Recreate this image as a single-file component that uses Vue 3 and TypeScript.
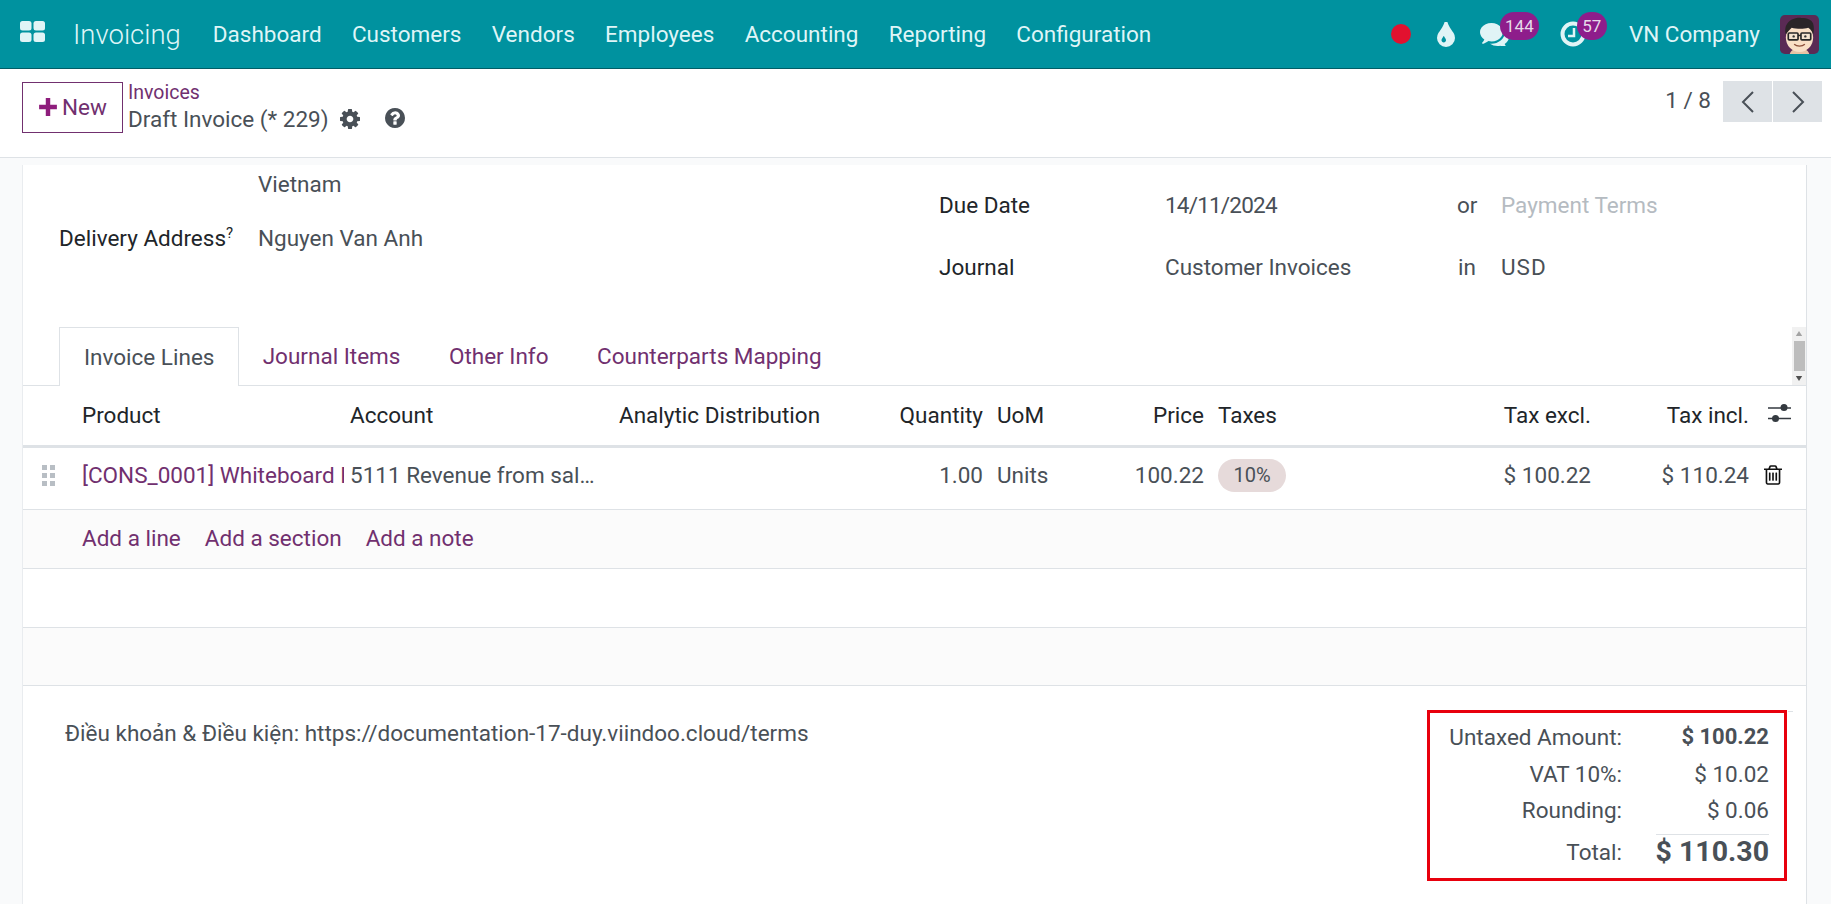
<script setup lang="ts">
const menus = ['Dashboard', 'Customers', 'Vendors', 'Employees', 'Accounting', 'Reporting', 'Configuration']
const tabs = ['Journal Items', 'Other Info', 'Counterparts Mapping']
const totals = [
  { label: 'Untaxed Amount:', value: '$ 100.22', cls: 'strong' },
  { label: 'VAT 10%:', value: '$ 10.02', cls: '' },
  { label: 'Rounding:', value: '$ 0.06', cls: '' },
  { label: 'Total:', value: '$ 110.30', cls: 'grand' }
]
</script>

<template>
  <div class="page">
    <header class="navbar">
      <svg class="apps" viewBox="0 0 25 21" width="25" height="21">
        <rect x="0" y="0" width="11.5" height="9.5" rx="2.5" />
        <rect x="13.5" y="0" width="11.5" height="9.5" rx="2.5" />
        <rect x="0" y="11.5" width="11.5" height="9.5" rx="2.5" />
        <rect x="13.5" y="11.5" width="11.5" height="9.5" rx="2.5" />
      </svg>
      <span class="brand">Invoicing</span>
      <nav class="menu">
        <span v-for="m in menus" :key="m">{{ m }}</span>
      </nav>
      <div class="systray">
        <span class="rec"></span>
        <svg class="drop" viewBox="384 128 1024 1408" width="18" height="25">
          <path d="M896 1152q0-36-20-69-1-1-15.500-22.500t-25.500-38-25-44-21-50.500q-4-16-21-16t-21 16q-7 23-21 50.500t-25 44-25.500 38-15.500 22.500q-20 33-20 69 0 53 37.500 90.500t90.500 37.500 90.500-37.500 37.500-90.500zm512-128q0 212-150 362t-362 150-362-150-150-362q0-145 81-275 6-9 62.500-90.500t101-151 99.500-178 83-201.500q9-30 34-47t51-17 51.500 17 33.500 47q28 93 83 201.500t99.500 178 101 151 62.500 90.500q81 127 81 275z" />
        </svg>
        <div class="notif chat">
          <svg viewBox="0 256 1792 1280" width="29" height="23" preserveAspectRatio="none">
            <path d="M1408 768q0 139-94 257t-256.500 186.500-353.500 68.500q-86 0-176-16-124 88-278 128-36 9-86 16h-3q-11 0-20.500-8t-11.500-21q-1-3-1-6.500t.5-6.500 2-6l2.500-5 3.500-5.500 4-5 4.500-5 4-4.500q5-6 23-25t26-29.500 22.500-29 25-38.500 20.500-44q-124-72-195-177t-71-224q0-139 94-257t256.500-186.500 353.500-68.500 353.500 68.500 256.500 186.500 94 257zm384 256q0 120-71 224.500t-195 176.500q10 24 20.500 44t25 38.500 22.500 29 26 29.500 23 25q1 1 4 4.500t4.500 5 4 5 3.500 5.500l2.500 5 2 6 .5 6.500-1 6.500q-3 14-13 22t-22 7q-50-7-86-16-154-40-278-128-90 16-176 16-271 0-472-132 58 4 88 4 161 0 309-45t264-129q125-92 192-212t67-254q0-77-23-152 129 71 204 178t75 230z" />
          </svg>
          <span class="badge wide">144</span>
        </div>
        <div class="notif clock">
          <svg viewBox="0 0 26 26" width="26" height="26" fill="none">
            <circle cx="13" cy="13" r="10.5" stroke-width="4" />
            <path d="M14 7v8H8" stroke-width="2.5" />
          </svg>
          <span class="badge">57</span>
        </div>
        <span class="company">VN Company</span>
        <svg class="avatar" viewBox="0 0 40 40" width="39" height="39">
          <rect width="40" height="40" rx="5" fill="#5a2a55" />
          <path d="M10 40c1-4 5-6 10-6s9 2 10 6Z" fill="#e8c3a5" />
          <ellipse cx="20" cy="23" rx="14" ry="15" fill="#f8dfc6" />
          <path d="M6 20C3 9 12 2 22 3c6 0 11 2 12 6 1 3 1 8 0 11-1-3-2-5-5-7-6 2-13 1-17 0-2 2-4 4-6 7Z" fill="#2b2528" />
          <rect x="8.500" y="18.500" width="10" height="7" rx="1" fill="#f3e3d0" stroke="#262626" stroke-width="1.700" />
          <rect x="21.500" y="18.500" width="10" height="7" rx="1" fill="#f3e3d0" stroke="#262626" stroke-width="1.700" />
          <path d="M18.500 21h3" stroke="#262626" stroke-width="1.500" />
          <circle cx="14" cy="22" r="1.200" fill="#333" />
          <circle cx="26" cy="22" r="1.200" fill="#333" />
          <path d="M14.500 30c3 2.500 8 2.500 11 0" stroke="#8a4d38" stroke-width="1.400" fill="none" />
        </svg>
      </div>
    </header>

    <section class="panel">
      <button class="new-btn">
        <svg viewBox="0 0 18 18" width="20" height="20"><path d="M7 1h4v6h6v4h-6v6H7v-6H1V7h6Z" /></svg>
        <span>New</span>
      </button>
      <div class="crumbs">
        <a class="crumb">Invoices</a>
        <div class="current">
          <span>Draft Invoice (* 229)</span>
          <svg class="gear" viewBox="128 128 1536 1536" width="20" height="20">
            <path d="M1152 896q0-106-75-181t-181-75-181 75-75 181 75 181 181 75 181-75 75-181zm512-109v222q0 12-8 23t-20 13l-185 28q-19 54-39 91 35 50 107 138 10 12 10 25t-9 23q-27 37-99 108t-94 71q-12 0-26-9l-138-108q-44 23-91 38-16 136-29 186-7 28-36 28h-222q-14 0-24.500-8.500t-11.500-21.500l-28-184q-49-16-90-37l-141 107q-10 9-25 9-14 0-25-11-126-114-165-168-7-10-7-23 0-12 8-23 15-21 51-66.500t54-70.500q-27-50-41-99l-183-27q-13-2-21-12.500t-8-23.500v-222q0-12 8-23t19-13l186-28q14-46 39-92-40-57-107-138-10-12-10-24 0-10 9-23 26-36 98.500-107.500t94.500-71.500q13 0 26 10l138 107q44-23 91-38 16-136 29-186 7-28 36-28h222q14 0 24.500 8.500t11.500 21.500l28 184q49 16 90 37l142-107q9-9 24-9 13 0 25 10 129 119 165 170 7 8 7 22 0 12-8 23-15 21-51 66.500t-54 70.500q26 50 41 98l183 28q13 2 21 12.500t8 23.500z" />
          </svg>
          <svg class="help" viewBox="128 128 1536 1536" width="20" height="20">
            <path d="M1024 1376v-192q0-14-9-23t-23-9h-192q-14 0-23 9t-9 23v192q0 14 9 23t23 9h192q14 0 23-9t9-23zm256-672q0-88-55.500-163t-138.500-116-170-41q-243 0-371 213-15 24 8 42l132 100q7 6 19 6 16 0 25-12 53-68 86-92 34-24 86-24 48 0 85.500 26t37.500 59q0 38-20 61t-68 45q-63 28-115.500 86.500t-52.500 125.500v36q0 14 9 23t23 9h192q14 0 23-9t9-23q0-19 21.500-49.500t54.500-49.500q32-18 49-28.500t46-35 44.500-48 28-60.500 12.500-81zm384 192q0 209-103 385.500t-279.500 279.500-385.500 103-385.500-103-279.500-279.500-103-385.500 103-385.500 279.500-279.500 385.500-103 385.500 103 279.500 279.500 103 385.500z" />
          </svg>
        </div>
      </div>
      <div class="pager">
        <span class="count">1 / 8</span>
        <div class="pager-btns">
          <button><svg viewBox="0 0 14 24" width="14" height="24"><path d="M12 2 2 12l10 10" /></svg></button>
          <button><svg viewBox="0 0 14 24" width="14" height="24"><path d="M2 2l10 10L2 22" /></svg></button>
        </div>
      </div>
    </section>

    <main class="content">
      <div class="sheet">
        <div class="fields">
          <div class="col-left">
            <div class="f-row top"><span class="label"></span><span class="val">Vietnam</span></div>
            <div class="f-row addr"><span class="label dark">Delivery Address<sup>?</sup></span><span class="val">Nguyen Van Anh</span></div>
          </div>
          <div class="col-right">
            <div class="r-row">
              <span class="r-label">Due Date</span><span class="r-val date">14/11/2024</span>
              <span class="r-sep">or</span><span class="muted">Payment Terms</span>
            </div>
            <div class="r-row">
              <span class="r-label">Journal</span><span class="r-val">Customer Invoices</span>
              <span class="r-sep in">in</span><span class="usd">USD</span>
            </div>
          </div>
        </div>

        <div class="tabs-wrap">
          <div class="tabs">
            <span class="tab active">Invoice Lines</span>
            <span v-for="t in tabs" :key="t" class="tab">{{ t }}</span>
          </div>
          <div class="scroll">
            <svg viewBox="0 0 10 6"><path d="M5 0l4 6H1Z" fill="#a3a3a3" /></svg>
            <span class="thumb"></span>
            <svg viewBox="0 0 10 6"><path d="M5 6 1 0h8Z" fill="#505050" /></svg>
          </div>
        </div>

        <div class="grid head">
          <span></span>
          <span>Product</span><span>Account</span><span>Analytic Distribution</span>
          <span class="r">Quantity</span><span class="pl">UoM</span><span class="r">Price</span><span class="pl">Taxes</span>
          <span class="r">Tax excl.</span><span class="r">Tax incl.</span>
          <svg class="sliders" viewBox="0 0 23 18" width="23" height="18">
            <path d="M0 4h23M0 14.500h23" stroke="#343a40" stroke-width="1.300" />
            <circle cx="16" cy="3.500" r="3.500" fill="#343a40" /><circle cx="7.500" cy="14.500" r="3.500" fill="#343a40" />
          </svg>
        </div>
        <div class="grid line">
          <svg class="grip" viewBox="0 0 13 21" width="13" height="21">
            <g fill="#b8bec4">
              <rect x="0" y="0" width="5" height="5" /><rect x="8" y="0" width="5" height="5" />
              <rect x="0" y="8" width="5" height="5" /><rect x="8" y="8" width="5" height="5" />
              <rect x="0" y="16" width="5" height="5" /><rect x="8" y="16" width="5" height="5" />
            </g>
          </svg>
          <span class="link clip">[CONS_0001] Whiteboard Pen</span>
          <span class="clip ell">5111 Revenue from sales</span>
          <span></span>
          <span class="r">1.00</span><span class="pl">Units</span><span class="r">100.22</span>
          <span class="pl"><span class="pill">10%</span></span>
          <span class="r">$ 100.22</span><span class="r">$ 110.24</span>
          <svg class="trash" viewBox="192 128 1408 1536" width="18" height="20">
            <path d="M704 736v576q0 14-9 23t-23 9h-64q-14 0-23-9t-9-23v-576q0-14 9-23t23-9h64q14 0 23 9t9 23zm256 0v576q0 14-9 23t-23 9h-64q-14 0-23-9t-9-23v-576q0-14 9-23t23-9h64q14 0 23 9t9 23zm256 0v576q0 14-9 23t-23 9h-64q-14 0-23-9t-9-23v-576q0-14 9-23t23-9h64q14 0 23 9t9 23zm128 724v-948h-896v948q0 22 7 40.500t14.500 27 10.500 8.500h832q3 0 10.500-8.500t14.500-27 7-40.500zm-672-1076h448l-48-117q-7-9-17-11h-317q-10 2-17 11zm928 32v64q0 14-9 23t-23 9h-96v948q0 83-47 143.500t-113 60.500h-832q-66 0-113-58.500t-47-141.500v-952h-96q-14 0-23-9t-9-23v-64q0-14 9-23t23-9h309l70-167q15-37 54-63t79-26h320q40 0 79 26t54 63l70 167h309q14 0 23 9t9 23z" />
          </svg>
        </div>
        <div class="add-row">
          <a>Add a line</a><a>Add a section</a><a>Add a note</a>
        </div>
        <div class="blank one"></div>
        <div class="blank two"></div>

        <div class="footer">
          <div class="terms">Điều khoản &amp; Điều kiện: https://documentation-17-duy.viindoo.cloud/terms</div>
          <div class="totals">
            <div v-for="t in totals" :key="t.label" class="t-row" :class="t.cls">
              <span class="t-label">{{ t.label }}</span>
              <span class="t-val">{{ t.value }}</span>
            </div>
          </div>
        </div>
      </div>
    </main>
  </div>
</template>

<style>
html, body { margin: 0; background: #f9fafb; overflow: hidden; }
</style>

<style scoped>
.page {
  width: 1831px; height: 904px; overflow: hidden; background: #f9fafb;
  font-family: Roboto, sans-serif; font-size: 22.5px; color: #495057;
}
.navbar {
  height: 69px; box-sizing: border-box; background: #00929f; border-bottom: 1px solid #015d66;
  display: flex; align-items: center; color: #dff5f7; padding-left: 20px;
}
.apps { fill: #e0f4f6; margin-top: -5px; }
.brand { font-size: 27.5px; font-weight: 300; margin-left: 28px; }
.menu { display: flex; gap: 30.3px; margin-left: 32px; }
.systray { margin-left: auto; display: flex; align-items: center; padding-right: 12px; }
.rec { width: 20px; height: 20px; border-radius: 50%; background: #e2112f; margin-right: 26px; }
.drop { fill: #e0f4f6; margin-right: 25px; display: block; }
.notif { position: relative; display: flex; }
.notif svg { display: block; }
.notif.chat { margin-right: 51px; }
.chat svg { fill: #e0f4f6; }
.clock svg { stroke: #e0f4f6; }
.notif.clock { margin-right: 43px; }
.badge {
  position: absolute; top: -9px; left: 17px; height: 28px; width: 30px; border-radius: 14px;
  background: #8e1d8b; color: #e6dbe9; font-size: 17px; display: flex; align-items: center; justify-content: center;
}
.badge.wide { top: -11px; left: 20px; width: 39px; }
.company { margin-right: 20px; }
.avatar { display: block; }

.panel {
  height: 89px; background: #fff; border-bottom: 1px solid #dee2e6; display: flex; box-sizing: border-box;
  padding: 13px 9px 0 22px;
}
.new-btn {
  width: 101px; height: 51px; border: 1px solid #71306f; background: #fff; color: #71306f;
  font: 22.5px Roboto, sans-serif; display: flex; align-items: center; justify-content: center; gap: 4px; padding: 0 0 2px;
}
.new-btn svg { fill: #8e1d7c; }
.crumbs { margin-left: 5px; margin-top: -2px; }
.crumb { display: block; color: #71306f; font-size: 19.5px; line-height: 26px; }
.current { display: flex; align-items: center; line-height: 30px; margin-top: -2px; }
.gear { fill: #495057; margin-left: 11px; }
.help { fill: #495057; margin-left: 25px; margin-top: -2px; }
.pager { margin-left: auto; display: flex; align-items: flex-start; }
.count { margin-right: 12px; margin-top: 5px; }
.pager-btns { display: flex; gap: 1px; margin-top: -1px; }
.pager-btns button {
  width: 49px; height: 41px; border: 0; padding: 0; background: #dee2e6; display: flex; align-items: center; justify-content: center;
}
.pager-btns path { fill: none; stroke: #495057; stroke-width: 2; }

.content { padding: 7px 24px 0 22px; }
.sheet { background: #fff; height: 740px; border-left: 1px solid #e9ecef; border-right: 1px solid #dee2e6; }
.fields { display: flex; height: 153px; }
.col-left { width: 898px; padding-left: 36px; box-sizing: border-box; }
.f-row { display: flex; line-height: 26px; }
.f-row.top { margin-top: 6px; height: 54px; }
.label { width: 199px; }
.dark { color: #212529; }
.dark sup { font-size: 15px; line-height: 0; }
.col-right { flex: 1; padding-top: 27px; }
.r-row { display: flex; line-height: 26px; margin-bottom: 36px; }
.r-label { width: 244px; color: #212529; padding-left: 18px; box-sizing: border-box; }
.r-val { width: 292px; }
.date { letter-spacing: -0.8px; }
.usd { letter-spacing: 1px; }
.r-sep { width: 44px; }
.r-sep.in { padding-left: 1px; box-sizing: border-box; }
.muted { color: #b5bbc1; }

.tabs-wrap { display: flex; justify-content: space-between; height: 63px; position: relative; border-bottom: 1px solid #dee2e6; box-sizing: border-box; margin-top: 5px; }
.tabs { display: flex; padding-left: 36px; }
.tab { display: flex; align-items: center; padding: 0 24.25px; color: #71306f; height: 58px; margin-top: 4px; line-height: 1; }
.tab.active {
  background: #fff; color: #495057; border: 1px solid #dee2e6; border-bottom: 0; height: 59px; box-sizing: border-box;
  padding: 0 24px; margin-right: -1px; margin-bottom: -1px; position: relative;
}
.scroll {
  width: 14px; background: #f1f1f1; display: flex; flex-direction: column; align-items: center; justify-content: space-between;
  height: 58px; margin-top: 4px; padding: 4px 0; box-sizing: border-box; position: absolute; right: 0;
}
.thumb { width: 11px; height: 30px; background: #bdbdbd; }
.scroll svg { width: 8px; height: 5px; }

.grid {
  display: grid; align-items: center;
  grid-template-columns: 59px 268px 269px 204px 160px 61px 160px 130px 257px 158px 56px;
  box-sizing: border-box;
}
.head { height: 62px; padding-bottom: 2px; color: #212529; border-bottom: 3px solid #dee2e6; }
.line { height: 62px; padding-bottom: 7px; border-bottom: 1px solid #dee2e6; }
.r { text-align: right; }
.pl { padding-left: 14px; }
.sliders { margin-left: 19px; margin-top: -3px; }
.grip { margin-left: 19px; }
.trash { margin-left: 15px; fill: #111; }
.link { color: #71306f; margin-right: 6px; }
.clip { overflow: hidden; white-space: nowrap; }
.ell { text-overflow: ellipsis; padding-right: 24px; }
.pill { display: inline-block; background: #e6dada; border-radius: 17px; width: 68px; height: 33px; line-height: 33px; text-align: center; font-size: 20px; }
.add-row { height: 59px; padding-bottom: 2px; background: #fbfbfb; border-bottom: 1px solid #dee2e6; padding-left: 59px; display: flex; align-items: center; gap: 24px; color: #71306f; box-sizing: border-box; }
.blank { height: 59px; border-bottom: 1px solid #dee2e6; box-sizing: border-box; }
.blank.two { background: #fbfbfb; height: 58px; }
.footer { display: flex; justify-content: space-between; }
.terms { padding: 34px 0 0 42px; line-height: 26px; }
.totals {
  box-sizing: border-box; width: 360px; height: 171px; border: 3px solid #e8000d; margin: 24px 19px 0 0;
  padding: 11px 15px 0 0; position: relative;
}
.totals::before {
  content: ''; position: absolute; top: -2px; right: -9px; width: 5px; height: 1px; background: #dee2e6;
}
.t-row { display: flex; justify-content: flex-end; line-height: 26px; margin-bottom: 10.5px; }
.t-label { flex: 1; text-align: right; }
.t-val { width: 147px; text-align: right; }
.strong .t-val { font-weight: 700; font-size: 22px; }
.grand { margin-bottom: 0; margin-top: 2px; }
.grand .t-val { font-size: 28.5px; font-weight: 700; line-height: 36px; position: relative; }
.grand .t-val::before {
  content: ''; position: absolute; top: 0; right: 0; width: 113px; height: 1px; background: #dee2e6;
}
.grand .t-label { align-self: center; }
</style>
